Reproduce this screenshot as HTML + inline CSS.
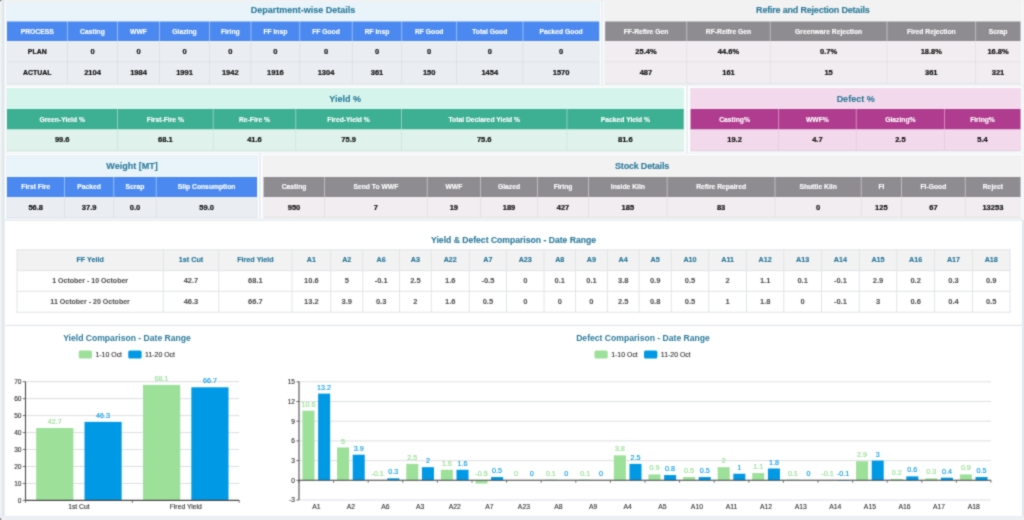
<!DOCTYPE html>
<html><head><meta charset="utf-8"><title>Dashboard</title>
<style>
html,body{margin:0;padding:0;}
body{width:1024px;height:520px;overflow:hidden;position:relative;background:#fff;font-family:"Liberation Sans",sans-serif;}
#wrap{position:absolute;left:0;top:0;width:1024px;height:520px;overflow:hidden;background:#fff;filter:url(#soft);}
.abs{position:absolute;}
.card{position:absolute;box-sizing:border-box;border:1px solid #e9ecef;}
.ttl{position:absolute;left:0;right:0;text-align:center;font-weight:bold;color:#2b7b9b;-webkit-text-stroke:0.1px #2b7b9b;font-size:9px;white-space:nowrap;}
.c{position:absolute;box-sizing:border-box;text-align:center;font-weight:bold;white-space:nowrap;overflow:hidden;}
.h{color:#fff;font-size:6.75px;-webkit-text-stroke:0.12px #fff;}
.d{color:#111;font-size:6.9px;-webkit-text-stroke:0.22px #111;}
.cmp{position:absolute;box-sizing:border-box;text-align:center;white-space:nowrap;}
.cmp.hh{color:#27789a;font-weight:bold;font-size:7.2px;-webkit-text-stroke:0.15px #27789a;}
.cmp.dd{color:#505050;font-weight:bold;font-size:7.15px;-webkit-text-stroke:0.06px #505050;}
svg text{font-family:"Liberation Sans",sans-serif;}
</style></head>
<body>
<svg width="0" height="0" style="position:absolute"><defs><filter id="soft" x="0" y="0" width="100%" height="100%" color-interpolation-filters="sRGB"><feConvolveMatrix order="3" kernelMatrix="0.035 0.095 0.035 0.095 0.48 0.095 0.035 0.095 0.035" divisor="1" edgeMode="duplicate" preserveAlpha="true"/></filter></defs></svg>
<div id="wrap">
<svg class="abs" style="left:0;top:0" width="1024" height="520" viewBox="0 0 1024 520">
<rect x="0.00" y="0.00" width="1024.00" height="520.00" fill="#ffffff"/>
<rect x="0.00" y="0.00" width="1024.00" height="1.50" fill="#f1f1f1"/>
<rect x="0.00" y="0.00" width="1.50" height="520.00" fill="#f1f2f3"/>
<rect x="1.50" y="0.00" width="3.20" height="520.00" fill="#e0e8ee"/>
<rect x="1022.00" y="220.00" width="2.00" height="300.00" fill="#e0e8ee"/>
<line x1="4.70" y1="220.20" x2="1024.00" y2="220.20" stroke="#e0e8ee" stroke-width="1.2"/>
<line x1="4.70" y1="325.30" x2="1024.00" y2="325.30" stroke="#e0e8ee" stroke-width="1.2"/>
<rect x="0.00" y="516.20" width="1024.00" height="3.80" fill="#eef1f4"/>
<rect x="0.00" y="516.20" width="1024.00" height="0.90" fill="#e4eaef"/>
<rect x="0.00" y="518.00" width="1.20" height="2.00" fill="#8a8a8a"/>
<rect x="0.00" y="0.00" width="1.20" height="1.20" fill="#777"/>
<rect x="1022.30" y="0.00" width="1.70" height="220.00" fill="#f3f4f5"/>
<rect x="601.00" y="0.00" width="2.20" height="85.70" fill="#e9f0f5"/>
<rect x="5.00" y="85.20" width="1019.00" height="1.00" fill="#e9f0f5"/>
<rect x="685.90" y="85.70" width="2.20" height="67.50" fill="#e9f0f5"/>
<rect x="5.00" y="152.70" width="1019.00" height="1.00" fill="#e9f0f5"/>
<rect x="258.80" y="153.20" width="2.40" height="66.50" fill="#e9f0f5"/>
<rect x="6.00" y="1.50" width="594.20" height="83.60" fill="#eeeff0"/>
<rect x="6.80" y="1.90" width="592.60" height="82.00" fill="#e8f3fa"/>
<rect x="7.00" y="21.50" width="592.20" height="19.50" fill="#4b89f1"/>
<rect x="7.00" y="41.00" width="592.20" height="42.40" fill="#eaeef3"/>
<line x1="67.50" y1="21.50" x2="67.50" y2="41.00" stroke="rgba(255,255,255,.42)" stroke-width="1"/>
<line x1="67.50" y1="41.00" x2="67.50" y2="83.40" stroke="rgba(0,0,0,.05)" stroke-width="1"/>
<line x1="117.50" y1="21.50" x2="117.50" y2="41.00" stroke="rgba(255,255,255,.42)" stroke-width="1"/>
<line x1="117.50" y1="41.00" x2="117.50" y2="83.40" stroke="rgba(0,0,0,.05)" stroke-width="1"/>
<line x1="159.50" y1="21.50" x2="159.50" y2="41.00" stroke="rgba(255,255,255,.42)" stroke-width="1"/>
<line x1="159.50" y1="41.00" x2="159.50" y2="83.40" stroke="rgba(0,0,0,.05)" stroke-width="1"/>
<line x1="209.50" y1="21.50" x2="209.50" y2="41.00" stroke="rgba(255,255,255,.42)" stroke-width="1"/>
<line x1="209.50" y1="41.00" x2="209.50" y2="83.40" stroke="rgba(0,0,0,.05)" stroke-width="1"/>
<line x1="251.00" y1="21.50" x2="251.00" y2="41.00" stroke="rgba(255,255,255,.42)" stroke-width="1"/>
<line x1="251.00" y1="41.00" x2="251.00" y2="83.40" stroke="rgba(0,0,0,.05)" stroke-width="1"/>
<line x1="299.75" y1="21.50" x2="299.75" y2="41.00" stroke="rgba(255,255,255,.42)" stroke-width="1"/>
<line x1="299.75" y1="41.00" x2="299.75" y2="83.40" stroke="rgba(0,0,0,.05)" stroke-width="1"/>
<line x1="352.25" y1="21.50" x2="352.25" y2="41.00" stroke="rgba(255,255,255,.42)" stroke-width="1"/>
<line x1="352.25" y1="41.00" x2="352.25" y2="83.40" stroke="rgba(0,0,0,.05)" stroke-width="1"/>
<line x1="401.75" y1="21.50" x2="401.75" y2="41.00" stroke="rgba(255,255,255,.42)" stroke-width="1"/>
<line x1="401.75" y1="41.00" x2="401.75" y2="83.40" stroke="rgba(0,0,0,.05)" stroke-width="1"/>
<line x1="456.60" y1="21.50" x2="456.60" y2="41.00" stroke="rgba(255,255,255,.42)" stroke-width="1"/>
<line x1="456.60" y1="41.00" x2="456.60" y2="83.40" stroke="rgba(0,0,0,.05)" stroke-width="1"/>
<line x1="523.00" y1="21.50" x2="523.00" y2="41.00" stroke="rgba(255,255,255,.42)" stroke-width="1"/>
<line x1="523.00" y1="41.00" x2="523.00" y2="83.40" stroke="rgba(0,0,0,.05)" stroke-width="1"/>
<line x1="7.00" y1="62.00" x2="599.20" y2="62.00" stroke="rgba(0,0,0,.05)" stroke-width="1"/>
<line x1="7.00" y1="83.40" x2="599.20" y2="83.40" stroke="rgba(0,0,0,.05)" stroke-width="1"/>
<rect x="604.20" y="1.50" width="417.30" height="83.60" fill="#eeeff0"/>
<rect x="605.00" y="1.90" width="415.70" height="82.00" fill="#f2f2f2"/>
<rect x="605.20" y="21.50" width="415.30" height="19.50" fill="#8e8c90"/>
<rect x="605.20" y="41.00" width="415.30" height="42.40" fill="#f1edf0"/>
<line x1="686.75" y1="21.50" x2="686.75" y2="41.00" stroke="rgba(255,255,255,.42)" stroke-width="1"/>
<line x1="686.75" y1="41.00" x2="686.75" y2="83.40" stroke="rgba(0,0,0,.05)" stroke-width="1"/>
<line x1="770.25" y1="21.50" x2="770.25" y2="41.00" stroke="rgba(255,255,255,.42)" stroke-width="1"/>
<line x1="770.25" y1="41.00" x2="770.25" y2="83.40" stroke="rgba(0,0,0,.05)" stroke-width="1"/>
<line x1="887.00" y1="21.50" x2="887.00" y2="41.00" stroke="rgba(255,255,255,.42)" stroke-width="1"/>
<line x1="887.00" y1="41.00" x2="887.00" y2="83.40" stroke="rgba(0,0,0,.05)" stroke-width="1"/>
<line x1="975.60" y1="21.50" x2="975.60" y2="41.00" stroke="rgba(255,255,255,.42)" stroke-width="1"/>
<line x1="975.60" y1="41.00" x2="975.60" y2="83.40" stroke="rgba(0,0,0,.05)" stroke-width="1"/>
<line x1="605.20" y1="62.00" x2="1020.50" y2="62.00" stroke="rgba(0,0,0,.05)" stroke-width="1"/>
<line x1="605.20" y1="83.40" x2="1020.50" y2="83.40" stroke="rgba(0,0,0,.05)" stroke-width="1"/>
<rect x="6.00" y="87.70" width="678.40" height="64.30" fill="#eeeff0"/>
<rect x="6.80" y="88.10" width="676.80" height="62.70" fill="#d5f5ec"/>
<rect x="7.00" y="109.00" width="676.70" height="20.50" fill="#3daf92"/>
<rect x="7.00" y="129.50" width="676.70" height="20.80" fill="#dff2ec"/>
<line x1="117.50" y1="109.00" x2="117.50" y2="129.50" stroke="rgba(255,255,255,.42)" stroke-width="1"/>
<line x1="117.50" y1="129.50" x2="117.50" y2="150.30" stroke="rgba(0,0,0,.05)" stroke-width="1"/>
<line x1="213.25" y1="109.00" x2="213.25" y2="129.50" stroke="rgba(255,255,255,.42)" stroke-width="1"/>
<line x1="213.25" y1="129.50" x2="213.25" y2="150.30" stroke="rgba(0,0,0,.05)" stroke-width="1"/>
<line x1="295.75" y1="109.00" x2="295.75" y2="129.50" stroke="rgba(255,255,255,.42)" stroke-width="1"/>
<line x1="295.75" y1="129.50" x2="295.75" y2="150.30" stroke="rgba(0,0,0,.05)" stroke-width="1"/>
<line x1="401.50" y1="109.00" x2="401.50" y2="129.50" stroke="rgba(255,255,255,.42)" stroke-width="1"/>
<line x1="401.50" y1="129.50" x2="401.50" y2="150.30" stroke="rgba(0,0,0,.05)" stroke-width="1"/>
<line x1="567.00" y1="109.00" x2="567.00" y2="129.50" stroke="rgba(255,255,255,.42)" stroke-width="1"/>
<line x1="567.00" y1="129.50" x2="567.00" y2="150.30" stroke="rgba(0,0,0,.05)" stroke-width="1"/>
<line x1="7.00" y1="150.30" x2="683.70" y2="150.30" stroke="rgba(0,0,0,.05)" stroke-width="1"/>
<rect x="689.80" y="87.70" width="331.70" height="64.30" fill="#eeeff0"/>
<rect x="690.60" y="88.10" width="330.10" height="62.70" fill="#f3d9ec"/>
<rect x="690.60" y="109.00" width="329.90" height="20.50" fill="#b03c8f"/>
<rect x="690.60" y="129.50" width="329.90" height="20.80" fill="#f3d9ec"/>
<line x1="778.60" y1="109.00" x2="778.60" y2="129.50" stroke="rgba(255,255,255,.42)" stroke-width="1"/>
<line x1="778.60" y1="129.50" x2="778.60" y2="150.30" stroke="rgba(0,0,0,.05)" stroke-width="1"/>
<line x1="856.25" y1="109.00" x2="856.25" y2="129.50" stroke="rgba(255,255,255,.42)" stroke-width="1"/>
<line x1="856.25" y1="129.50" x2="856.25" y2="150.30" stroke="rgba(0,0,0,.05)" stroke-width="1"/>
<line x1="944.50" y1="109.00" x2="944.50" y2="129.50" stroke="rgba(255,255,255,.42)" stroke-width="1"/>
<line x1="944.50" y1="129.50" x2="944.50" y2="150.30" stroke="rgba(0,0,0,.05)" stroke-width="1"/>
<line x1="690.60" y1="150.30" x2="1020.50" y2="150.30" stroke="rgba(0,0,0,.05)" stroke-width="1"/>
<rect x="6.00" y="155.20" width="252.00" height="63.80" fill="#eeeff0"/>
<rect x="6.80" y="155.60" width="250.40" height="62.20" fill="#e8f3fa"/>
<rect x="7.00" y="177.00" width="250.00" height="20.00" fill="#4b89f1"/>
<rect x="7.00" y="197.00" width="250.00" height="20.30" fill="#eaeef3"/>
<line x1="64.50" y1="177.00" x2="64.50" y2="197.00" stroke="rgba(255,255,255,.42)" stroke-width="1"/>
<line x1="64.50" y1="197.00" x2="64.50" y2="217.30" stroke="rgba(0,0,0,.05)" stroke-width="1"/>
<line x1="113.75" y1="177.00" x2="113.75" y2="197.00" stroke="rgba(255,255,255,.42)" stroke-width="1"/>
<line x1="113.75" y1="197.00" x2="113.75" y2="217.30" stroke="rgba(0,0,0,.05)" stroke-width="1"/>
<line x1="156.25" y1="177.00" x2="156.25" y2="197.00" stroke="rgba(255,255,255,.42)" stroke-width="1"/>
<line x1="156.25" y1="197.00" x2="156.25" y2="217.30" stroke="rgba(0,0,0,.05)" stroke-width="1"/>
<line x1="7.00" y1="217.30" x2="257.00" y2="217.30" stroke="rgba(0,0,0,.05)" stroke-width="1"/>
<rect x="262.60" y="155.20" width="758.90" height="63.80" fill="#eeeff0"/>
<rect x="263.40" y="155.60" width="757.30" height="62.20" fill="#f2f2f2"/>
<rect x="263.60" y="177.00" width="756.90" height="20.00" fill="#8e8c90"/>
<rect x="263.60" y="197.00" width="756.90" height="20.30" fill="#f1edf0"/>
<line x1="324.50" y1="177.00" x2="324.50" y2="197.00" stroke="rgba(255,255,255,.42)" stroke-width="1"/>
<line x1="324.50" y1="197.00" x2="324.50" y2="217.30" stroke="rgba(0,0,0,.05)" stroke-width="1"/>
<line x1="427.25" y1="177.00" x2="427.25" y2="197.00" stroke="rgba(255,255,255,.42)" stroke-width="1"/>
<line x1="427.25" y1="197.00" x2="427.25" y2="217.30" stroke="rgba(0,0,0,.05)" stroke-width="1"/>
<line x1="480.50" y1="177.00" x2="480.50" y2="197.00" stroke="rgba(255,255,255,.42)" stroke-width="1"/>
<line x1="480.50" y1="197.00" x2="480.50" y2="217.30" stroke="rgba(0,0,0,.05)" stroke-width="1"/>
<line x1="537.50" y1="177.00" x2="537.50" y2="197.00" stroke="rgba(255,255,255,.42)" stroke-width="1"/>
<line x1="537.50" y1="197.00" x2="537.50" y2="217.30" stroke="rgba(0,0,0,.05)" stroke-width="1"/>
<line x1="588.50" y1="177.00" x2="588.50" y2="197.00" stroke="rgba(255,255,255,.42)" stroke-width="1"/>
<line x1="588.50" y1="197.00" x2="588.50" y2="217.30" stroke="rgba(0,0,0,.05)" stroke-width="1"/>
<line x1="667.20" y1="177.00" x2="667.20" y2="197.00" stroke="rgba(255,255,255,.42)" stroke-width="1"/>
<line x1="667.20" y1="197.00" x2="667.20" y2="217.30" stroke="rgba(0,0,0,.05)" stroke-width="1"/>
<line x1="775.00" y1="177.00" x2="775.00" y2="197.00" stroke="rgba(255,255,255,.42)" stroke-width="1"/>
<line x1="775.00" y1="197.00" x2="775.00" y2="217.30" stroke="rgba(0,0,0,.05)" stroke-width="1"/>
<line x1="861.25" y1="177.00" x2="861.25" y2="197.00" stroke="rgba(255,255,255,.42)" stroke-width="1"/>
<line x1="861.25" y1="197.00" x2="861.25" y2="217.30" stroke="rgba(0,0,0,.05)" stroke-width="1"/>
<line x1="901.50" y1="177.00" x2="901.50" y2="197.00" stroke="rgba(255,255,255,.42)" stroke-width="1"/>
<line x1="901.50" y1="197.00" x2="901.50" y2="217.30" stroke="rgba(0,0,0,.05)" stroke-width="1"/>
<line x1="965.30" y1="177.00" x2="965.30" y2="197.00" stroke="rgba(255,255,255,.42)" stroke-width="1"/>
<line x1="965.30" y1="197.00" x2="965.30" y2="217.30" stroke="rgba(0,0,0,.05)" stroke-width="1"/>
<line x1="263.60" y1="217.30" x2="1020.50" y2="217.30" stroke="rgba(0,0,0,.05)" stroke-width="1"/>
<rect x="17.00" y="249.80" width="993.00" height="20.80" fill="#f2f2f2"/>
<line x1="17.00" y1="249.30" x2="17.00" y2="312.70" stroke="#e1e4e7" stroke-width="1"/>
<line x1="163.25" y1="249.30" x2="163.25" y2="312.70" stroke="#e1e4e7" stroke-width="1"/>
<line x1="218.75" y1="249.30" x2="218.75" y2="312.70" stroke="#e1e4e7" stroke-width="1"/>
<line x1="292.00" y1="249.30" x2="292.00" y2="312.70" stroke="#e1e4e7" stroke-width="1"/>
<line x1="330.75" y1="249.30" x2="330.75" y2="312.70" stroke="#e1e4e7" stroke-width="1"/>
<line x1="362.75" y1="249.30" x2="362.75" y2="312.70" stroke="#e1e4e7" stroke-width="1"/>
<line x1="399.50" y1="249.30" x2="399.50" y2="312.70" stroke="#e1e4e7" stroke-width="1"/>
<line x1="431.25" y1="249.30" x2="431.25" y2="312.70" stroke="#e1e4e7" stroke-width="1"/>
<line x1="469.25" y1="249.30" x2="469.25" y2="312.70" stroke="#e1e4e7" stroke-width="1"/>
<line x1="506.50" y1="249.30" x2="506.50" y2="312.70" stroke="#e1e4e7" stroke-width="1"/>
<line x1="544.00" y1="249.30" x2="544.00" y2="312.70" stroke="#e1e4e7" stroke-width="1"/>
<line x1="575.50" y1="249.30" x2="575.50" y2="312.70" stroke="#e1e4e7" stroke-width="1"/>
<line x1="607.40" y1="249.30" x2="607.40" y2="312.70" stroke="#e1e4e7" stroke-width="1"/>
<line x1="639.00" y1="249.30" x2="639.00" y2="312.70" stroke="#e1e4e7" stroke-width="1"/>
<line x1="671.25" y1="249.30" x2="671.25" y2="312.70" stroke="#e1e4e7" stroke-width="1"/>
<line x1="708.75" y1="249.30" x2="708.75" y2="312.70" stroke="#e1e4e7" stroke-width="1"/>
<line x1="746.50" y1="249.30" x2="746.50" y2="312.70" stroke="#e1e4e7" stroke-width="1"/>
<line x1="783.75" y1="249.30" x2="783.75" y2="312.70" stroke="#e1e4e7" stroke-width="1"/>
<line x1="821.50" y1="249.30" x2="821.50" y2="312.70" stroke="#e1e4e7" stroke-width="1"/>
<line x1="859.25" y1="249.30" x2="859.25" y2="312.70" stroke="#e1e4e7" stroke-width="1"/>
<line x1="896.75" y1="249.30" x2="896.75" y2="312.70" stroke="#e1e4e7" stroke-width="1"/>
<line x1="934.50" y1="249.30" x2="934.50" y2="312.70" stroke="#e1e4e7" stroke-width="1"/>
<line x1="972.50" y1="249.30" x2="972.50" y2="312.70" stroke="#e1e4e7" stroke-width="1"/>
<line x1="1010.00" y1="249.30" x2="1010.00" y2="312.70" stroke="#e1e4e7" stroke-width="1"/>
<line x1="16.50" y1="249.80" x2="1010.50" y2="249.80" stroke="#e1e4e7" stroke-width="1"/>
<line x1="16.50" y1="270.60" x2="1010.50" y2="270.60" stroke="#e1e4e7" stroke-width="1"/>
<line x1="16.50" y1="291.30" x2="1010.50" y2="291.30" stroke="#e1e4e7" stroke-width="1"/>
<line x1="16.50" y1="312.20" x2="1010.50" y2="312.20" stroke="#e1e4e7" stroke-width="1"/>
</svg>
<div class="ttl" style="left:6px;width:594.20px;top:-0.5px;height:20.00px;line-height:21.00px;font-size:9px;letter-spacing:0px">Department-wise Details</div>
<div class="c h" style="left:7px;top:21.5px;width:60.50px;height:19.50px;line-height:19.10px">PROCESS</div>
<div class="c h" style="left:67.5px;top:21.5px;width:50.00px;height:19.50px;line-height:19.10px">Casting</div>
<div class="c h" style="left:117.5px;top:21.5px;width:42.00px;height:19.50px;line-height:19.10px">WWF</div>
<div class="c h" style="left:159.5px;top:21.5px;width:50.00px;height:19.50px;line-height:19.10px">Glazing</div>
<div class="c h" style="left:209.5px;top:21.5px;width:41.50px;height:19.50px;line-height:19.10px">Firing</div>
<div class="c h" style="left:251px;top:21.5px;width:48.75px;height:19.50px;line-height:19.10px">FF Insp</div>
<div class="c h" style="left:299.75px;top:21.5px;width:52.50px;height:19.50px;line-height:19.10px">FF Good</div>
<div class="c h" style="left:352.25px;top:21.5px;width:49.50px;height:19.50px;line-height:19.10px">RF Insp</div>
<div class="c h" style="left:401.75px;top:21.5px;width:54.85px;height:19.50px;line-height:19.10px">RF Good</div>
<div class="c h" style="left:456.6px;top:21.5px;width:66.40px;height:19.50px;line-height:19.10px">Total Good</div>
<div class="c h" style="left:523px;top:21.5px;width:76.20px;height:19.50px;line-height:19.10px">Packed Good</div>
<div class="c d" style="left:7px;top:41px;width:60.50px;height:21.00px;line-height:21.40px">PLAN</div>
<div class="c d" style="left:67.5px;top:41px;width:50.00px;height:21.00px;line-height:21.40px;font-size:7.5px">0</div>
<div class="c d" style="left:117.5px;top:41px;width:42.00px;height:21.00px;line-height:21.40px;font-size:7.5px">0</div>
<div class="c d" style="left:159.5px;top:41px;width:50.00px;height:21.00px;line-height:21.40px;font-size:7.5px">0</div>
<div class="c d" style="left:209.5px;top:41px;width:41.50px;height:21.00px;line-height:21.40px;font-size:7.5px">0</div>
<div class="c d" style="left:251px;top:41px;width:48.75px;height:21.00px;line-height:21.40px;font-size:7.5px">0</div>
<div class="c d" style="left:299.75px;top:41px;width:52.50px;height:21.00px;line-height:21.40px;font-size:7.5px">0</div>
<div class="c d" style="left:352.25px;top:41px;width:49.50px;height:21.00px;line-height:21.40px;font-size:7.5px">0</div>
<div class="c d" style="left:401.75px;top:41px;width:54.85px;height:21.00px;line-height:21.40px;font-size:7.5px">0</div>
<div class="c d" style="left:456.6px;top:41px;width:66.40px;height:21.00px;line-height:21.40px;font-size:7.5px">0</div>
<div class="c d" style="left:523px;top:41px;width:76.20px;height:21.00px;line-height:21.40px;font-size:7.5px">0</div>
<div class="c d" style="left:7px;top:62px;width:60.50px;height:21.40px;line-height:21.80px">ACTUAL</div>
<div class="c d" style="left:67.5px;top:62px;width:50.00px;height:21.40px;line-height:21.80px;font-size:7.5px">2104</div>
<div class="c d" style="left:117.5px;top:62px;width:42.00px;height:21.40px;line-height:21.80px;font-size:7.5px">1984</div>
<div class="c d" style="left:159.5px;top:62px;width:50.00px;height:21.40px;line-height:21.80px;font-size:7.5px">1991</div>
<div class="c d" style="left:209.5px;top:62px;width:41.50px;height:21.40px;line-height:21.80px;font-size:7.5px">1942</div>
<div class="c d" style="left:251px;top:62px;width:48.75px;height:21.40px;line-height:21.80px;font-size:7.5px">1916</div>
<div class="c d" style="left:299.75px;top:62px;width:52.50px;height:21.40px;line-height:21.80px;font-size:7.5px">1304</div>
<div class="c d" style="left:352.25px;top:62px;width:49.50px;height:21.40px;line-height:21.80px;font-size:7.5px">361</div>
<div class="c d" style="left:401.75px;top:62px;width:54.85px;height:21.40px;line-height:21.80px;font-size:7.5px">150</div>
<div class="c d" style="left:456.6px;top:62px;width:66.40px;height:21.40px;line-height:21.80px;font-size:7.5px">1454</div>
<div class="c d" style="left:523px;top:62px;width:76.20px;height:21.40px;line-height:21.80px;font-size:7.5px">1570</div>
<div class="ttl" style="left:604.2px;width:417.30px;top:-0.5px;height:20.00px;line-height:21.00px;font-size:9px;letter-spacing:-0.2px">Refire and Rejection Details</div>
<div class="c h" style="left:605.2px;top:21.5px;width:81.55px;height:19.50px;line-height:19.10px">FF-Refire Gen</div>
<div class="c h" style="left:686.75px;top:21.5px;width:83.50px;height:19.50px;line-height:19.10px">RF-Reifre Gen</div>
<div class="c h" style="left:770.25px;top:21.5px;width:116.75px;height:19.50px;line-height:19.10px">Greenware Rejection</div>
<div class="c h" style="left:887px;top:21.5px;width:88.60px;height:19.50px;line-height:19.10px">Fired Rejection</div>
<div class="c h" style="left:975.6px;top:21.5px;width:44.90px;height:19.50px;line-height:19.10px">Scrap</div>
<div class="c d" style="left:605.2px;top:41px;width:81.55px;height:21.00px;line-height:21.40px;font-size:7.5px">25.4%</div>
<div class="c d" style="left:686.75px;top:41px;width:83.50px;height:21.00px;line-height:21.40px;font-size:7.5px">44.6%</div>
<div class="c d" style="left:770.25px;top:41px;width:116.75px;height:21.00px;line-height:21.40px;font-size:7.5px">0.7%</div>
<div class="c d" style="left:887px;top:41px;width:88.60px;height:21.00px;line-height:21.40px;font-size:7.5px">18.8%</div>
<div class="c d" style="left:975.6px;top:41px;width:44.90px;height:21.00px;line-height:21.40px;font-size:7.5px">16.8%</div>
<div class="c d" style="left:605.2px;top:62px;width:81.55px;height:21.40px;line-height:21.80px;font-size:7.5px">487</div>
<div class="c d" style="left:686.75px;top:62px;width:83.50px;height:21.40px;line-height:21.80px;font-size:7.5px">161</div>
<div class="c d" style="left:770.25px;top:62px;width:116.75px;height:21.40px;line-height:21.80px;font-size:7.5px">15</div>
<div class="c d" style="left:887px;top:62px;width:88.60px;height:21.40px;line-height:21.80px;font-size:7.5px">361</div>
<div class="c d" style="left:975.6px;top:62px;width:44.90px;height:21.40px;line-height:21.80px;font-size:7.5px">321</div>
<div class="ttl" style="left:6px;width:678.40px;top:88.0px;height:21.30px;line-height:22.30px;font-size:9px;letter-spacing:0px">Yield %</div>
<div class="c h" style="left:7px;top:110px;width:110.50px;height:20.50px;line-height:20.10px">Green-Yield %</div>
<div class="c h" style="left:117.5px;top:110px;width:95.75px;height:20.50px;line-height:20.10px">First-Fire %</div>
<div class="c h" style="left:213.25px;top:110px;width:82.50px;height:20.50px;line-height:20.10px">Re-Fire %</div>
<div class="c h" style="left:295.75px;top:110px;width:105.75px;height:20.50px;line-height:20.10px">Fired-Yield %</div>
<div class="c h" style="left:401.5px;top:110px;width:165.50px;height:20.50px;line-height:20.10px">Total Declared Yield %</div>
<div class="c h" style="left:567px;top:110px;width:116.70px;height:20.50px;line-height:20.10px">Packed Yield %</div>
<div class="c d" style="left:7px;top:128.5px;width:110.50px;height:20.80px;line-height:21.20px;font-size:7.5px">99.6</div>
<div class="c d" style="left:117.5px;top:128.5px;width:95.75px;height:20.80px;line-height:21.20px;font-size:7.5px">68.1</div>
<div class="c d" style="left:213.25px;top:128.5px;width:82.50px;height:20.80px;line-height:21.20px;font-size:7.5px">41.6</div>
<div class="c d" style="left:295.75px;top:128.5px;width:105.75px;height:20.80px;line-height:21.20px;font-size:7.5px">75.9</div>
<div class="c d" style="left:401.5px;top:128.5px;width:165.50px;height:20.80px;line-height:21.20px;font-size:7.5px">75.6</div>
<div class="c d" style="left:567px;top:128.5px;width:116.70px;height:20.80px;line-height:21.20px;font-size:7.5px">81.6</div>
<div class="ttl" style="left:689.8px;width:331.70px;top:88.0px;height:21.30px;line-height:22.30px;font-size:9px;letter-spacing:0px">Defect %</div>
<div class="c h" style="left:690.6px;top:110px;width:88.00px;height:20.50px;line-height:20.10px">Casting%</div>
<div class="c h" style="left:778.6px;top:110px;width:77.65px;height:20.50px;line-height:20.10px">WWF%</div>
<div class="c h" style="left:856.25px;top:110px;width:88.25px;height:20.50px;line-height:20.10px">Glazing%</div>
<div class="c h" style="left:944.5px;top:110px;width:76.00px;height:20.50px;line-height:20.10px">Firing%</div>
<div class="c d" style="left:690.6px;top:128.5px;width:88.00px;height:20.80px;line-height:21.20px;font-size:7.5px">19.2</div>
<div class="c d" style="left:778.6px;top:128.5px;width:77.65px;height:20.80px;line-height:21.20px;font-size:7.5px">4.7</div>
<div class="c d" style="left:856.25px;top:128.5px;width:88.25px;height:20.80px;line-height:21.20px;font-size:7.5px">2.5</div>
<div class="c d" style="left:944.5px;top:128.5px;width:76.00px;height:20.80px;line-height:21.20px;font-size:7.5px">5.4</div>
<div class="ttl" style="left:6px;width:252.00px;top:155.2px;height:21.80px;line-height:22.80px;font-size:9px;letter-spacing:0px">Weight [MT]</div>
<div class="c h" style="left:7px;top:177px;width:57.50px;height:20.00px;line-height:19.60px">First Fire</div>
<div class="c h" style="left:64.5px;top:177px;width:49.25px;height:20.00px;line-height:19.60px">Packed</div>
<div class="c h" style="left:113.75px;top:177px;width:42.50px;height:20.00px;line-height:19.60px">Scrap</div>
<div class="c h" style="left:156.25px;top:177px;width:100.75px;height:20.00px;line-height:19.60px">Slip Consumption</div>
<div class="c d" style="left:7px;top:198px;width:57.50px;height:20.30px;line-height:20.70px;font-size:7.5px">56.8</div>
<div class="c d" style="left:64.5px;top:198px;width:49.25px;height:20.30px;line-height:20.70px;font-size:7.5px">37.9</div>
<div class="c d" style="left:113.75px;top:198px;width:42.50px;height:20.30px;line-height:20.70px;font-size:7.5px">0.0</div>
<div class="c d" style="left:156.25px;top:198px;width:100.75px;height:20.30px;line-height:20.70px;font-size:7.5px">59.0</div>
<div class="ttl" style="left:262.6px;width:758.90px;top:155.2px;height:21.80px;line-height:22.80px;font-size:9px;letter-spacing:-0.2px">Stock Details</div>
<div class="c h" style="left:263.6px;top:177px;width:60.90px;height:20.00px;line-height:19.60px">Casting</div>
<div class="c h" style="left:324.5px;top:177px;width:102.75px;height:20.00px;line-height:19.60px">Send To WWF</div>
<div class="c h" style="left:427.25px;top:177px;width:53.25px;height:20.00px;line-height:19.60px">WWF</div>
<div class="c h" style="left:480.5px;top:177px;width:57.00px;height:20.00px;line-height:19.60px">Glazed</div>
<div class="c h" style="left:537.5px;top:177px;width:51.00px;height:20.00px;line-height:19.60px">Firing</div>
<div class="c h" style="left:588.5px;top:177px;width:78.70px;height:20.00px;line-height:19.60px">Inside Kiln</div>
<div class="c h" style="left:667.2px;top:177px;width:107.80px;height:20.00px;line-height:19.60px">Refire Repaired</div>
<div class="c h" style="left:775px;top:177px;width:86.25px;height:20.00px;line-height:19.60px">Shuttle Kiln</div>
<div class="c h" style="left:861.25px;top:177px;width:40.25px;height:20.00px;line-height:19.60px">FI</div>
<div class="c h" style="left:901.5px;top:177px;width:63.80px;height:20.00px;line-height:19.60px">FI-Good</div>
<div class="c h" style="left:965.3px;top:177px;width:55.20px;height:20.00px;line-height:19.60px">Reject</div>
<div class="c d" style="left:263.6px;top:198px;width:60.90px;height:20.30px;line-height:20.70px;font-size:7.5px">950</div>
<div class="c d" style="left:324.5px;top:198px;width:102.75px;height:20.30px;line-height:20.70px;font-size:7.5px">7</div>
<div class="c d" style="left:427.25px;top:198px;width:53.25px;height:20.30px;line-height:20.70px;font-size:7.5px">19</div>
<div class="c d" style="left:480.5px;top:198px;width:57.00px;height:20.30px;line-height:20.70px;font-size:7.5px">189</div>
<div class="c d" style="left:537.5px;top:198px;width:51.00px;height:20.30px;line-height:20.70px;font-size:7.5px">427</div>
<div class="c d" style="left:588.5px;top:198px;width:78.70px;height:20.30px;line-height:20.70px;font-size:7.5px">185</div>
<div class="c d" style="left:667.2px;top:198px;width:107.80px;height:20.30px;line-height:20.70px;font-size:7.5px">83</div>
<div class="c d" style="left:775px;top:198px;width:86.25px;height:20.30px;line-height:20.70px;font-size:7.5px">0</div>
<div class="c d" style="left:861.25px;top:198px;width:40.25px;height:20.30px;line-height:20.70px;font-size:7.5px">125</div>
<div class="c d" style="left:901.5px;top:198px;width:63.80px;height:20.30px;line-height:20.70px;font-size:7.5px">67</div>
<div class="c d" style="left:965.3px;top:198px;width:55.20px;height:20.30px;line-height:20.70px;font-size:7.5px">13253</div>
<div class="ttl" style="left:17px;width:993px;top:232px;height:16px;line-height:16px;font-size:8.6px">Yield &amp; Defect Comparison - Date Range</div>
<div class="cmp hh" style="left:17px;top:249.8px;width:146.25px;height:20.80px;line-height:20.80px">FF Yeild</div>
<div class="cmp hh" style="left:163.25px;top:249.8px;width:55.50px;height:20.80px;line-height:20.80px">1st Cut</div>
<div class="cmp hh" style="left:218.75px;top:249.8px;width:73.25px;height:20.80px;line-height:20.80px">Fired Yield</div>
<div class="cmp hh" style="left:292px;top:249.8px;width:38.75px;height:20.80px;line-height:20.80px">A1</div>
<div class="cmp hh" style="left:330.75px;top:249.8px;width:32.00px;height:20.80px;line-height:20.80px">A2</div>
<div class="cmp hh" style="left:362.75px;top:249.8px;width:36.75px;height:20.80px;line-height:20.80px">A6</div>
<div class="cmp hh" style="left:399.5px;top:249.8px;width:31.75px;height:20.80px;line-height:20.80px">A3</div>
<div class="cmp hh" style="left:431.25px;top:249.8px;width:38.00px;height:20.80px;line-height:20.80px">A22</div>
<div class="cmp hh" style="left:469.25px;top:249.8px;width:37.25px;height:20.80px;line-height:20.80px">A7</div>
<div class="cmp hh" style="left:506.5px;top:249.8px;width:37.50px;height:20.80px;line-height:20.80px">A23</div>
<div class="cmp hh" style="left:544px;top:249.8px;width:31.50px;height:20.80px;line-height:20.80px">A8</div>
<div class="cmp hh" style="left:575.5px;top:249.8px;width:31.90px;height:20.80px;line-height:20.80px">A9</div>
<div class="cmp hh" style="left:607.4px;top:249.8px;width:31.60px;height:20.80px;line-height:20.80px">A4</div>
<div class="cmp hh" style="left:639px;top:249.8px;width:32.25px;height:20.80px;line-height:20.80px">A5</div>
<div class="cmp hh" style="left:671.25px;top:249.8px;width:37.50px;height:20.80px;line-height:20.80px">A10</div>
<div class="cmp hh" style="left:708.75px;top:249.8px;width:37.75px;height:20.80px;line-height:20.80px">A11</div>
<div class="cmp hh" style="left:746.5px;top:249.8px;width:37.25px;height:20.80px;line-height:20.80px">A12</div>
<div class="cmp hh" style="left:783.75px;top:249.8px;width:37.75px;height:20.80px;line-height:20.80px">A13</div>
<div class="cmp hh" style="left:821.5px;top:249.8px;width:37.75px;height:20.80px;line-height:20.80px">A14</div>
<div class="cmp hh" style="left:859.25px;top:249.8px;width:37.50px;height:20.80px;line-height:20.80px">A15</div>
<div class="cmp hh" style="left:896.75px;top:249.8px;width:37.75px;height:20.80px;line-height:20.80px">A16</div>
<div class="cmp hh" style="left:934.5px;top:249.8px;width:38.00px;height:20.80px;line-height:20.80px">A17</div>
<div class="cmp hh" style="left:972.5px;top:249.8px;width:37.50px;height:20.80px;line-height:20.80px">A18</div>
<div class="cmp dd" style="left:17px;top:270.6px;width:146.25px;height:20.70px;line-height:20.70px;font-size:7.05px">1 October - 10 October</div>
<div class="cmp dd" style="left:163.25px;top:270.6px;width:55.50px;height:20.70px;line-height:20.70px;font-size:7.5px">42.7</div>
<div class="cmp dd" style="left:218.75px;top:270.6px;width:73.25px;height:20.70px;line-height:20.70px;font-size:7.5px">68.1</div>
<div class="cmp dd" style="left:292px;top:270.6px;width:38.75px;height:20.70px;line-height:20.70px;font-size:7.5px">10.6</div>
<div class="cmp dd" style="left:330.75px;top:270.6px;width:32.00px;height:20.70px;line-height:20.70px;font-size:7.5px">5</div>
<div class="cmp dd" style="left:362.75px;top:270.6px;width:36.75px;height:20.70px;line-height:20.70px;font-size:7.5px">-0.1</div>
<div class="cmp dd" style="left:399.5px;top:270.6px;width:31.75px;height:20.70px;line-height:20.70px;font-size:7.5px">2.5</div>
<div class="cmp dd" style="left:431.25px;top:270.6px;width:38.00px;height:20.70px;line-height:20.70px;font-size:7.5px">1.6</div>
<div class="cmp dd" style="left:469.25px;top:270.6px;width:37.25px;height:20.70px;line-height:20.70px;font-size:7.5px">-0.5</div>
<div class="cmp dd" style="left:506.5px;top:270.6px;width:37.50px;height:20.70px;line-height:20.70px;font-size:7.5px">0</div>
<div class="cmp dd" style="left:544px;top:270.6px;width:31.50px;height:20.70px;line-height:20.70px;font-size:7.5px">0.1</div>
<div class="cmp dd" style="left:575.5px;top:270.6px;width:31.90px;height:20.70px;line-height:20.70px;font-size:7.5px">0.1</div>
<div class="cmp dd" style="left:607.4px;top:270.6px;width:31.60px;height:20.70px;line-height:20.70px;font-size:7.5px">3.8</div>
<div class="cmp dd" style="left:639px;top:270.6px;width:32.25px;height:20.70px;line-height:20.70px;font-size:7.5px">0.9</div>
<div class="cmp dd" style="left:671.25px;top:270.6px;width:37.50px;height:20.70px;line-height:20.70px;font-size:7.5px">0.5</div>
<div class="cmp dd" style="left:708.75px;top:270.6px;width:37.75px;height:20.70px;line-height:20.70px;font-size:7.5px">2</div>
<div class="cmp dd" style="left:746.5px;top:270.6px;width:37.25px;height:20.70px;line-height:20.70px;font-size:7.5px">1.1</div>
<div class="cmp dd" style="left:783.75px;top:270.6px;width:37.75px;height:20.70px;line-height:20.70px;font-size:7.5px">0.1</div>
<div class="cmp dd" style="left:821.5px;top:270.6px;width:37.75px;height:20.70px;line-height:20.70px;font-size:7.5px">-0.1</div>
<div class="cmp dd" style="left:859.25px;top:270.6px;width:37.50px;height:20.70px;line-height:20.70px;font-size:7.5px">2.9</div>
<div class="cmp dd" style="left:896.75px;top:270.6px;width:37.75px;height:20.70px;line-height:20.70px;font-size:7.5px">0.2</div>
<div class="cmp dd" style="left:934.5px;top:270.6px;width:38.00px;height:20.70px;line-height:20.70px;font-size:7.5px">0.3</div>
<div class="cmp dd" style="left:972.5px;top:270.6px;width:37.50px;height:20.70px;line-height:20.70px;font-size:7.5px">0.9</div>
<div class="cmp dd" style="left:17px;top:292.2px;width:146.25px;height:20.90px;line-height:20.90px;font-size:7.05px">11 October - 20 October</div>
<div class="cmp dd" style="left:163.25px;top:292.2px;width:55.50px;height:20.90px;line-height:20.90px;font-size:7.5px">46.3</div>
<div class="cmp dd" style="left:218.75px;top:292.2px;width:73.25px;height:20.90px;line-height:20.90px;font-size:7.5px">66.7</div>
<div class="cmp dd" style="left:292px;top:292.2px;width:38.75px;height:20.90px;line-height:20.90px;font-size:7.5px">13.2</div>
<div class="cmp dd" style="left:330.75px;top:292.2px;width:32.00px;height:20.90px;line-height:20.90px;font-size:7.5px">3.9</div>
<div class="cmp dd" style="left:362.75px;top:292.2px;width:36.75px;height:20.90px;line-height:20.90px;font-size:7.5px">0.3</div>
<div class="cmp dd" style="left:399.5px;top:292.2px;width:31.75px;height:20.90px;line-height:20.90px;font-size:7.5px">2</div>
<div class="cmp dd" style="left:431.25px;top:292.2px;width:38.00px;height:20.90px;line-height:20.90px;font-size:7.5px">1.6</div>
<div class="cmp dd" style="left:469.25px;top:292.2px;width:37.25px;height:20.90px;line-height:20.90px;font-size:7.5px">0.5</div>
<div class="cmp dd" style="left:506.5px;top:292.2px;width:37.50px;height:20.90px;line-height:20.90px;font-size:7.5px">0</div>
<div class="cmp dd" style="left:544px;top:292.2px;width:31.50px;height:20.90px;line-height:20.90px;font-size:7.5px">0</div>
<div class="cmp dd" style="left:575.5px;top:292.2px;width:31.90px;height:20.90px;line-height:20.90px;font-size:7.5px">0</div>
<div class="cmp dd" style="left:607.4px;top:292.2px;width:31.60px;height:20.90px;line-height:20.90px;font-size:7.5px">2.5</div>
<div class="cmp dd" style="left:639px;top:292.2px;width:32.25px;height:20.90px;line-height:20.90px;font-size:7.5px">0.8</div>
<div class="cmp dd" style="left:671.25px;top:292.2px;width:37.50px;height:20.90px;line-height:20.90px;font-size:7.5px">0.5</div>
<div class="cmp dd" style="left:708.75px;top:292.2px;width:37.75px;height:20.90px;line-height:20.90px;font-size:7.5px">1</div>
<div class="cmp dd" style="left:746.5px;top:292.2px;width:37.25px;height:20.90px;line-height:20.90px;font-size:7.5px">1.8</div>
<div class="cmp dd" style="left:783.75px;top:292.2px;width:37.75px;height:20.90px;line-height:20.90px;font-size:7.5px">0</div>
<div class="cmp dd" style="left:821.5px;top:292.2px;width:37.75px;height:20.90px;line-height:20.90px;font-size:7.5px">-0.1</div>
<div class="cmp dd" style="left:859.25px;top:292.2px;width:37.50px;height:20.90px;line-height:20.90px;font-size:7.5px">3</div>
<div class="cmp dd" style="left:896.75px;top:292.2px;width:37.75px;height:20.90px;line-height:20.90px;font-size:7.5px">0.6</div>
<div class="cmp dd" style="left:934.5px;top:292.2px;width:38.00px;height:20.90px;line-height:20.90px;font-size:7.5px">0.4</div>
<div class="cmp dd" style="left:972.5px;top:292.2px;width:37.50px;height:20.90px;line-height:20.90px;font-size:7.5px">0.5</div>
<svg class="abs" style="left:0;top:0" width="1024" height="520" viewBox="0 0 1024 520">
<text x="127" y="340.8" text-anchor="middle" font-size="8.6" font-weight="bold" fill="#2b7b9b">Yield Comparison - Date Range</text>
<text x="643" y="340.8" text-anchor="middle" font-size="8.6" font-weight="bold" fill="#2b7b9b">Defect Comparison - Date Range</text>
<rect x="78.75" y="350.5" width="13.2" height="8" rx="1.6" fill="#9de09a"/>
<text x="95.45" y="357.2" font-size="6.95" fill="#333" stroke="#333" stroke-width="0.12">1-10 Oct</text>
<rect x="128.25" y="350.5" width="13.4" height="8" rx="1.6" fill="#0099e5"/>
<text x="145.05" y="357.2" font-size="6.95" fill="#333" stroke="#333" stroke-width="0.12">11-20 Oct</text>
<rect x="594.5" y="350.5" width="13.2" height="8" rx="1.6" fill="#9de09a"/>
<text x="611.2" y="357.2" font-size="6.95" fill="#333" stroke="#333" stroke-width="0.12">1-10 Oct</text>
<rect x="644.0" y="350.5" width="13.4" height="8" rx="1.6" fill="#0099e5"/>
<text x="660.8" y="357.2" font-size="6.95" fill="#333" stroke="#333" stroke-width="0.12">11-20 Oct</text>
<line x1="22.9" x2="25.5" y1="500.40" y2="500.40" stroke="#4a4a4a" stroke-width="0.8"/>
<text x="21.5" y="502.70" text-anchor="end" font-size="6.6" fill="#333" stroke="#333" stroke-width="0.12">0</text>
<line x1="25.5" x2="239.2" y1="483.44" y2="483.44" stroke="#d3d6db" stroke-width="0.8"/>
<line x1="22.9" x2="25.5" y1="483.44" y2="483.44" stroke="#4a4a4a" stroke-width="0.8"/>
<text x="21.5" y="485.74" text-anchor="end" font-size="6.6" fill="#333" stroke="#333" stroke-width="0.12">10</text>
<line x1="25.5" x2="239.2" y1="466.48" y2="466.48" stroke="#d3d6db" stroke-width="0.8"/>
<line x1="22.9" x2="25.5" y1="466.48" y2="466.48" stroke="#4a4a4a" stroke-width="0.8"/>
<text x="21.5" y="468.78" text-anchor="end" font-size="6.6" fill="#333" stroke="#333" stroke-width="0.12">20</text>
<line x1="25.5" x2="239.2" y1="449.52" y2="449.52" stroke="#d3d6db" stroke-width="0.8"/>
<line x1="22.9" x2="25.5" y1="449.52" y2="449.52" stroke="#4a4a4a" stroke-width="0.8"/>
<text x="21.5" y="451.82" text-anchor="end" font-size="6.6" fill="#333" stroke="#333" stroke-width="0.12">30</text>
<line x1="25.5" x2="239.2" y1="432.56" y2="432.56" stroke="#d3d6db" stroke-width="0.8"/>
<line x1="22.9" x2="25.5" y1="432.56" y2="432.56" stroke="#4a4a4a" stroke-width="0.8"/>
<text x="21.5" y="434.86" text-anchor="end" font-size="6.6" fill="#333" stroke="#333" stroke-width="0.12">40</text>
<line x1="25.5" x2="239.2" y1="415.60" y2="415.60" stroke="#d3d6db" stroke-width="0.8"/>
<line x1="22.9" x2="25.5" y1="415.60" y2="415.60" stroke="#4a4a4a" stroke-width="0.8"/>
<text x="21.5" y="417.90" text-anchor="end" font-size="6.6" fill="#333" stroke="#333" stroke-width="0.12">50</text>
<line x1="25.5" x2="239.2" y1="398.64" y2="398.64" stroke="#d3d6db" stroke-width="0.8"/>
<line x1="22.9" x2="25.5" y1="398.64" y2="398.64" stroke="#4a4a4a" stroke-width="0.8"/>
<text x="21.5" y="400.94" text-anchor="end" font-size="6.6" fill="#333" stroke="#333" stroke-width="0.12">60</text>
<line x1="25.5" x2="239.2" y1="381.68" y2="381.68" stroke="#d3d6db" stroke-width="0.8"/>
<line x1="22.9" x2="25.5" y1="381.68" y2="381.68" stroke="#4a4a4a" stroke-width="0.8"/>
<text x="21.5" y="383.98" text-anchor="end" font-size="6.6" fill="#333" stroke="#333" stroke-width="0.12">70</text>
<rect x="36.19" y="427.98" width="37.17" height="72.42" fill="#9de09a"/>
<text x="54.77" y="423.98" text-anchor="middle" font-size="7.2" fill="#9de09a" stroke="#9de09a" stroke-width="0.22">42.7</text>
<rect x="84.50" y="421.88" width="37.17" height="78.52" fill="#0099e5"/>
<text x="103.08" y="417.88" text-anchor="middle" font-size="7.2" fill="#0099e5" stroke="#0099e5" stroke-width="0.12">46.3</text>
<text x="78.92" y="509.2" text-anchor="middle" font-size="6.8" fill="#333" stroke="#333" stroke-width="0.12">1st Cut</text>
<rect x="143.03" y="384.90" width="37.17" height="115.50" fill="#9de09a"/>
<text x="161.62" y="380.90" text-anchor="middle" font-size="7.2" fill="#9de09a" stroke="#9de09a" stroke-width="0.22">68.1</text>
<rect x="191.35" y="387.28" width="37.17" height="113.12" fill="#0099e5"/>
<text x="209.93" y="383.28" text-anchor="middle" font-size="7.2" fill="#0099e5" stroke="#0099e5" stroke-width="0.12">66.7</text>
<text x="185.77" y="509.2" text-anchor="middle" font-size="6.8" fill="#333" stroke="#333" stroke-width="0.12">Fired Yield</text>
<line x1="25.5" x2="25.5" y1="381.7" y2="500.4" stroke="#4a4a4a" stroke-width="1.1"/>
<line x1="25.5" x2="239.2" y1="500.4" y2="500.4" stroke="#4a4a4a" stroke-width="1.1"/>
<line x1="25.50" x2="25.50" y1="500.4" y2="502.79999999999995" stroke="#4a4a4a" stroke-width="0.8"/>
<line x1="132.35" x2="132.35" y1="500.4" y2="502.79999999999995" stroke="#4a4a4a" stroke-width="0.8"/>
<line x1="239.20" x2="239.20" y1="500.4" y2="502.79999999999995" stroke="#4a4a4a" stroke-width="0.8"/>
<line x1="299.0" x2="991.0" y1="500.00" y2="500.00" stroke="#d3d6db" stroke-width="0.8"/>
<line x1="296.4" x2="299.0" y1="500.00" y2="500.00" stroke="#4a4a4a" stroke-width="0.8"/>
<text x="295.0" y="502.30" text-anchor="end" font-size="6.6" fill="#333" stroke="#333" stroke-width="0.12">-3</text>
<line x1="299.0" x2="991.0" y1="480.30" y2="480.30" stroke="#d3d6db" stroke-width="0.8"/>
<line x1="296.4" x2="299.0" y1="480.30" y2="480.30" stroke="#4a4a4a" stroke-width="0.8"/>
<text x="295.0" y="482.60" text-anchor="end" font-size="6.6" fill="#333" stroke="#333" stroke-width="0.12">0</text>
<line x1="299.0" x2="991.0" y1="460.60" y2="460.60" stroke="#d3d6db" stroke-width="0.8"/>
<line x1="296.4" x2="299.0" y1="460.60" y2="460.60" stroke="#4a4a4a" stroke-width="0.8"/>
<text x="295.0" y="462.90" text-anchor="end" font-size="6.6" fill="#333" stroke="#333" stroke-width="0.12">3</text>
<line x1="299.0" x2="991.0" y1="440.90" y2="440.90" stroke="#d3d6db" stroke-width="0.8"/>
<line x1="296.4" x2="299.0" y1="440.90" y2="440.90" stroke="#4a4a4a" stroke-width="0.8"/>
<text x="295.0" y="443.20" text-anchor="end" font-size="6.6" fill="#333" stroke="#333" stroke-width="0.12">6</text>
<line x1="299.0" x2="991.0" y1="421.20" y2="421.20" stroke="#d3d6db" stroke-width="0.8"/>
<line x1="296.4" x2="299.0" y1="421.20" y2="421.20" stroke="#4a4a4a" stroke-width="0.8"/>
<text x="295.0" y="423.50" text-anchor="end" font-size="6.6" fill="#333" stroke="#333" stroke-width="0.12">9</text>
<line x1="299.0" x2="991.0" y1="401.50" y2="401.50" stroke="#d3d6db" stroke-width="0.8"/>
<line x1="296.4" x2="299.0" y1="401.50" y2="401.50" stroke="#4a4a4a" stroke-width="0.8"/>
<text x="295.0" y="403.80" text-anchor="end" font-size="6.6" fill="#333" stroke="#333" stroke-width="0.12">12</text>
<line x1="299.0" x2="991.0" y1="381.80" y2="381.80" stroke="#d3d6db" stroke-width="0.8"/>
<line x1="296.4" x2="299.0" y1="381.80" y2="381.80" stroke="#4a4a4a" stroke-width="0.8"/>
<text x="295.0" y="384.10" text-anchor="end" font-size="6.6" fill="#333" stroke="#333" stroke-width="0.12">15</text>
<rect x="302.46" y="410.69" width="12.03" height="69.61" fill="#9de09a"/>
<text x="308.48" y="406.79" text-anchor="middle" font-size="7.2" fill="#9de09a" stroke="#9de09a" stroke-width="0.22">10.6</text>
<rect x="318.11" y="393.62" width="12.03" height="86.68" fill="#0099e5"/>
<text x="324.12" y="389.72" text-anchor="middle" font-size="7.2" fill="#0099e5" stroke="#0099e5" stroke-width="0.12">13.2</text>
<text x="316.30" y="508.9" text-anchor="middle" font-size="6.8" fill="#333" stroke="#333" stroke-width="0.12">A1</text>
<rect x="337.06" y="447.47" width="12.03" height="32.84" fill="#9de09a"/>
<text x="343.08" y="443.57" text-anchor="middle" font-size="7.2" fill="#9de09a" stroke="#9de09a" stroke-width="0.22">5</text>
<rect x="352.71" y="454.69" width="12.03" height="25.61" fill="#0099e5"/>
<text x="358.72" y="450.79" text-anchor="middle" font-size="7.2" fill="#0099e5" stroke="#0099e5" stroke-width="0.12">3.9</text>
<text x="350.90" y="508.9" text-anchor="middle" font-size="6.8" fill="#333" stroke="#333" stroke-width="0.12">A2</text>
<rect x="371.66" y="480.30" width="12.03" height="0.66" fill="#9de09a"/>
<text x="377.68" y="476.40" text-anchor="middle" font-size="7.2" fill="#9de09a" stroke="#9de09a" stroke-width="0.22">-0.1</text>
<rect x="387.31" y="478.33" width="12.03" height="1.97" fill="#0099e5"/>
<text x="393.32" y="474.43" text-anchor="middle" font-size="7.2" fill="#0099e5" stroke="#0099e5" stroke-width="0.12">0.3</text>
<text x="385.50" y="508.9" text-anchor="middle" font-size="6.8" fill="#333" stroke="#333" stroke-width="0.12">A6</text>
<rect x="406.26" y="463.88" width="12.03" height="16.42" fill="#9de09a"/>
<text x="412.28" y="459.98" text-anchor="middle" font-size="7.2" fill="#9de09a" stroke="#9de09a" stroke-width="0.22">2.5</text>
<rect x="421.91" y="467.17" width="12.03" height="13.13" fill="#0099e5"/>
<text x="427.92" y="463.27" text-anchor="middle" font-size="7.2" fill="#0099e5" stroke="#0099e5" stroke-width="0.12">2</text>
<text x="420.10" y="508.9" text-anchor="middle" font-size="6.8" fill="#333" stroke="#333" stroke-width="0.12">A3</text>
<rect x="440.86" y="469.79" width="12.03" height="10.51" fill="#9de09a"/>
<text x="446.88" y="465.89" text-anchor="middle" font-size="7.2" fill="#9de09a" stroke="#9de09a" stroke-width="0.22">1.6</text>
<rect x="456.51" y="469.79" width="12.03" height="10.51" fill="#0099e5"/>
<text x="462.52" y="465.89" text-anchor="middle" font-size="7.2" fill="#0099e5" stroke="#0099e5" stroke-width="0.12">1.6</text>
<text x="454.70" y="508.9" text-anchor="middle" font-size="6.8" fill="#333" stroke="#333" stroke-width="0.12">A22</text>
<rect x="475.46" y="480.30" width="12.03" height="3.28" fill="#9de09a"/>
<text x="481.48" y="476.40" text-anchor="middle" font-size="7.2" fill="#9de09a" stroke="#9de09a" stroke-width="0.22">-0.5</text>
<rect x="491.11" y="477.02" width="12.03" height="3.28" fill="#0099e5"/>
<text x="497.12" y="473.12" text-anchor="middle" font-size="7.2" fill="#0099e5" stroke="#0099e5" stroke-width="0.12">0.5</text>
<text x="489.30" y="508.9" text-anchor="middle" font-size="6.8" fill="#333" stroke="#333" stroke-width="0.12">A7</text>
<text x="516.08" y="476.40" text-anchor="middle" font-size="7.2" fill="#9de09a" stroke="#9de09a" stroke-width="0.22">0</text>
<text x="531.72" y="476.40" text-anchor="middle" font-size="7.2" fill="#0099e5" stroke="#0099e5" stroke-width="0.12">0</text>
<text x="523.90" y="508.9" text-anchor="middle" font-size="6.8" fill="#333" stroke="#333" stroke-width="0.12">A23</text>
<rect x="544.66" y="479.64" width="12.03" height="0.66" fill="#9de09a"/>
<text x="550.68" y="475.74" text-anchor="middle" font-size="7.2" fill="#9de09a" stroke="#9de09a" stroke-width="0.22">0.1</text>
<text x="566.32" y="476.40" text-anchor="middle" font-size="7.2" fill="#0099e5" stroke="#0099e5" stroke-width="0.12">0</text>
<text x="558.50" y="508.9" text-anchor="middle" font-size="6.8" fill="#333" stroke="#333" stroke-width="0.12">A8</text>
<rect x="579.26" y="479.64" width="12.03" height="0.66" fill="#9de09a"/>
<text x="585.28" y="475.74" text-anchor="middle" font-size="7.2" fill="#9de09a" stroke="#9de09a" stroke-width="0.22">0.1</text>
<text x="600.92" y="476.40" text-anchor="middle" font-size="7.2" fill="#0099e5" stroke="#0099e5" stroke-width="0.12">0</text>
<text x="593.10" y="508.9" text-anchor="middle" font-size="6.8" fill="#333" stroke="#333" stroke-width="0.12">A9</text>
<rect x="613.86" y="455.35" width="12.03" height="24.95" fill="#9de09a"/>
<text x="619.88" y="451.45" text-anchor="middle" font-size="7.2" fill="#9de09a" stroke="#9de09a" stroke-width="0.22">3.8</text>
<rect x="629.51" y="463.88" width="12.03" height="16.42" fill="#0099e5"/>
<text x="635.52" y="459.98" text-anchor="middle" font-size="7.2" fill="#0099e5" stroke="#0099e5" stroke-width="0.12">2.5</text>
<text x="627.70" y="508.9" text-anchor="middle" font-size="6.8" fill="#333" stroke="#333" stroke-width="0.12">A4</text>
<rect x="648.46" y="474.39" width="12.03" height="5.91" fill="#9de09a"/>
<text x="654.48" y="470.49" text-anchor="middle" font-size="7.2" fill="#9de09a" stroke="#9de09a" stroke-width="0.22">0.9</text>
<rect x="664.11" y="475.05" width="12.03" height="5.25" fill="#0099e5"/>
<text x="670.12" y="471.15" text-anchor="middle" font-size="7.2" fill="#0099e5" stroke="#0099e5" stroke-width="0.12">0.8</text>
<text x="662.30" y="508.9" text-anchor="middle" font-size="6.8" fill="#333" stroke="#333" stroke-width="0.12">A5</text>
<rect x="683.06" y="477.02" width="12.03" height="3.28" fill="#9de09a"/>
<text x="689.08" y="473.12" text-anchor="middle" font-size="7.2" fill="#9de09a" stroke="#9de09a" stroke-width="0.22">0.5</text>
<rect x="698.71" y="477.02" width="12.03" height="3.28" fill="#0099e5"/>
<text x="704.72" y="473.12" text-anchor="middle" font-size="7.2" fill="#0099e5" stroke="#0099e5" stroke-width="0.12">0.5</text>
<text x="696.90" y="508.9" text-anchor="middle" font-size="6.8" fill="#333" stroke="#333" stroke-width="0.12">A10</text>
<rect x="717.66" y="467.17" width="12.03" height="13.13" fill="#9de09a"/>
<text x="723.68" y="463.27" text-anchor="middle" font-size="7.2" fill="#9de09a" stroke="#9de09a" stroke-width="0.22">2</text>
<rect x="733.31" y="473.73" width="12.03" height="6.57" fill="#0099e5"/>
<text x="739.32" y="469.83" text-anchor="middle" font-size="7.2" fill="#0099e5" stroke="#0099e5" stroke-width="0.12">1</text>
<text x="731.50" y="508.9" text-anchor="middle" font-size="6.8" fill="#333" stroke="#333" stroke-width="0.12">A11</text>
<rect x="752.26" y="473.08" width="12.03" height="7.22" fill="#9de09a"/>
<text x="758.28" y="469.18" text-anchor="middle" font-size="7.2" fill="#9de09a" stroke="#9de09a" stroke-width="0.22">1.1</text>
<rect x="767.91" y="468.48" width="12.03" height="11.82" fill="#0099e5"/>
<text x="773.92" y="464.58" text-anchor="middle" font-size="7.2" fill="#0099e5" stroke="#0099e5" stroke-width="0.12">1.8</text>
<text x="766.10" y="508.9" text-anchor="middle" font-size="6.8" fill="#333" stroke="#333" stroke-width="0.12">A12</text>
<rect x="786.86" y="479.64" width="12.03" height="0.66" fill="#9de09a"/>
<text x="792.88" y="475.74" text-anchor="middle" font-size="7.2" fill="#9de09a" stroke="#9de09a" stroke-width="0.22">0.1</text>
<text x="808.52" y="476.40" text-anchor="middle" font-size="7.2" fill="#0099e5" stroke="#0099e5" stroke-width="0.12">0</text>
<text x="800.70" y="508.9" text-anchor="middle" font-size="6.8" fill="#333" stroke="#333" stroke-width="0.12">A13</text>
<rect x="821.46" y="480.30" width="12.03" height="0.66" fill="#9de09a"/>
<text x="827.48" y="476.40" text-anchor="middle" font-size="7.2" fill="#9de09a" stroke="#9de09a" stroke-width="0.22">-0.1</text>
<rect x="837.11" y="480.30" width="12.03" height="0.66" fill="#0099e5"/>
<text x="843.12" y="476.40" text-anchor="middle" font-size="7.2" fill="#0099e5" stroke="#0099e5" stroke-width="0.12">-0.1</text>
<text x="835.30" y="508.9" text-anchor="middle" font-size="6.8" fill="#333" stroke="#333" stroke-width="0.12">A14</text>
<rect x="856.06" y="461.26" width="12.03" height="19.04" fill="#9de09a"/>
<text x="862.08" y="457.36" text-anchor="middle" font-size="7.2" fill="#9de09a" stroke="#9de09a" stroke-width="0.22">2.9</text>
<rect x="871.71" y="460.60" width="12.03" height="19.70" fill="#0099e5"/>
<text x="877.72" y="456.70" text-anchor="middle" font-size="7.2" fill="#0099e5" stroke="#0099e5" stroke-width="0.12">3</text>
<text x="869.90" y="508.9" text-anchor="middle" font-size="6.8" fill="#333" stroke="#333" stroke-width="0.12">A15</text>
<rect x="890.66" y="478.99" width="12.03" height="1.31" fill="#9de09a"/>
<text x="896.68" y="475.09" text-anchor="middle" font-size="7.2" fill="#9de09a" stroke="#9de09a" stroke-width="0.22">0.2</text>
<rect x="906.31" y="476.36" width="12.03" height="3.94" fill="#0099e5"/>
<text x="912.32" y="472.46" text-anchor="middle" font-size="7.2" fill="#0099e5" stroke="#0099e5" stroke-width="0.12">0.6</text>
<text x="904.50" y="508.9" text-anchor="middle" font-size="6.8" fill="#333" stroke="#333" stroke-width="0.12">A16</text>
<rect x="925.26" y="478.33" width="12.03" height="1.97" fill="#9de09a"/>
<text x="931.28" y="474.43" text-anchor="middle" font-size="7.2" fill="#9de09a" stroke="#9de09a" stroke-width="0.22">0.3</text>
<rect x="940.91" y="477.67" width="12.03" height="2.63" fill="#0099e5"/>
<text x="946.92" y="473.77" text-anchor="middle" font-size="7.2" fill="#0099e5" stroke="#0099e5" stroke-width="0.12">0.4</text>
<text x="939.10" y="508.9" text-anchor="middle" font-size="6.8" fill="#333" stroke="#333" stroke-width="0.12">A17</text>
<rect x="959.86" y="474.39" width="12.03" height="5.91" fill="#9de09a"/>
<text x="965.88" y="470.49" text-anchor="middle" font-size="7.2" fill="#9de09a" stroke="#9de09a" stroke-width="0.22">0.9</text>
<rect x="975.51" y="477.02" width="12.03" height="3.28" fill="#0099e5"/>
<text x="981.52" y="473.12" text-anchor="middle" font-size="7.2" fill="#0099e5" stroke="#0099e5" stroke-width="0.12">0.5</text>
<text x="973.70" y="508.9" text-anchor="middle" font-size="6.8" fill="#333" stroke="#333" stroke-width="0.12">A18</text>
<line x1="299.0" x2="299.0" y1="381.5" y2="500" stroke="#4a4a4a" stroke-width="1.1"/>
<line x1="299.0" x2="991.0" y1="480.3" y2="480.3" stroke="#4a4a4a" stroke-width="1.1"/>
<line x1="299.00" x2="299.00" y1="480.3" y2="482.7" stroke="#4a4a4a" stroke-width="0.8"/>
<line x1="333.60" x2="333.60" y1="480.3" y2="482.7" stroke="#4a4a4a" stroke-width="0.8"/>
<line x1="368.20" x2="368.20" y1="480.3" y2="482.7" stroke="#4a4a4a" stroke-width="0.8"/>
<line x1="402.80" x2="402.80" y1="480.3" y2="482.7" stroke="#4a4a4a" stroke-width="0.8"/>
<line x1="437.40" x2="437.40" y1="480.3" y2="482.7" stroke="#4a4a4a" stroke-width="0.8"/>
<line x1="472.00" x2="472.00" y1="480.3" y2="482.7" stroke="#4a4a4a" stroke-width="0.8"/>
<line x1="506.60" x2="506.60" y1="480.3" y2="482.7" stroke="#4a4a4a" stroke-width="0.8"/>
<line x1="541.20" x2="541.20" y1="480.3" y2="482.7" stroke="#4a4a4a" stroke-width="0.8"/>
<line x1="575.80" x2="575.80" y1="480.3" y2="482.7" stroke="#4a4a4a" stroke-width="0.8"/>
<line x1="610.40" x2="610.40" y1="480.3" y2="482.7" stroke="#4a4a4a" stroke-width="0.8"/>
<line x1="645.00" x2="645.00" y1="480.3" y2="482.7" stroke="#4a4a4a" stroke-width="0.8"/>
<line x1="679.60" x2="679.60" y1="480.3" y2="482.7" stroke="#4a4a4a" stroke-width="0.8"/>
<line x1="714.20" x2="714.20" y1="480.3" y2="482.7" stroke="#4a4a4a" stroke-width="0.8"/>
<line x1="748.80" x2="748.80" y1="480.3" y2="482.7" stroke="#4a4a4a" stroke-width="0.8"/>
<line x1="783.40" x2="783.40" y1="480.3" y2="482.7" stroke="#4a4a4a" stroke-width="0.8"/>
<line x1="818.00" x2="818.00" y1="480.3" y2="482.7" stroke="#4a4a4a" stroke-width="0.8"/>
<line x1="852.60" x2="852.60" y1="480.3" y2="482.7" stroke="#4a4a4a" stroke-width="0.8"/>
<line x1="887.20" x2="887.20" y1="480.3" y2="482.7" stroke="#4a4a4a" stroke-width="0.8"/>
<line x1="921.80" x2="921.80" y1="480.3" y2="482.7" stroke="#4a4a4a" stroke-width="0.8"/>
<line x1="956.40" x2="956.40" y1="480.3" y2="482.7" stroke="#4a4a4a" stroke-width="0.8"/>
<line x1="991.00" x2="991.00" y1="480.3" y2="482.7" stroke="#4a4a4a" stroke-width="0.8"/>
</svg>
</div>
</body></html>
